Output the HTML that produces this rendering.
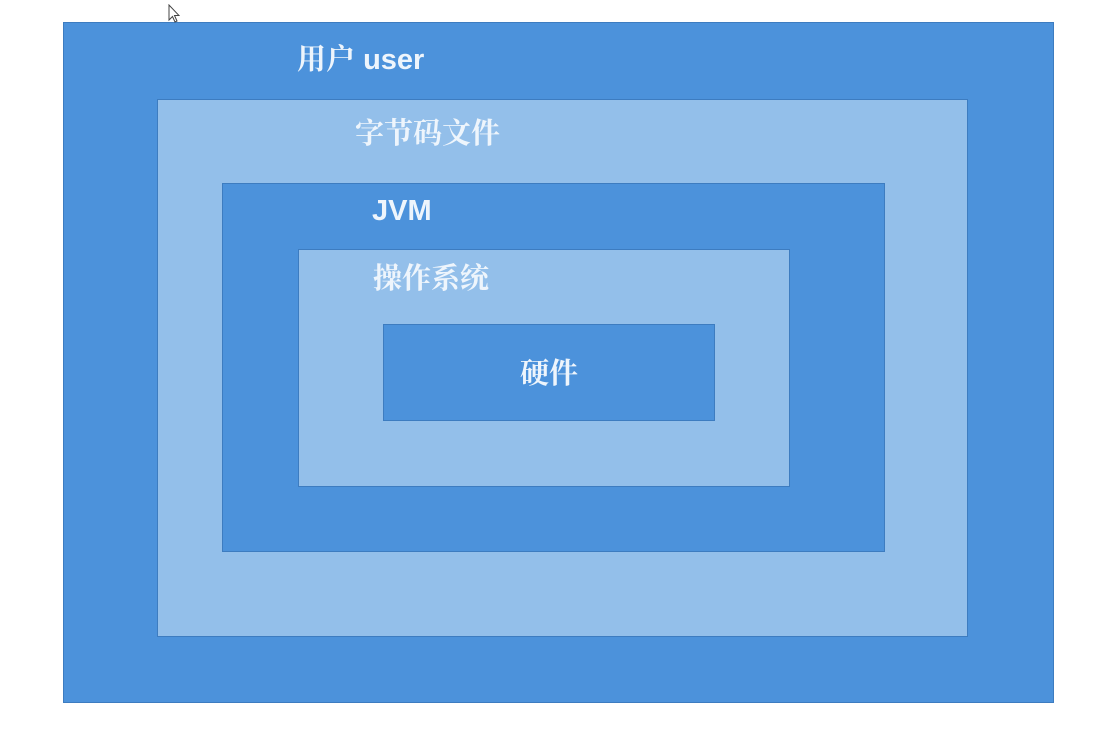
<!DOCTYPE html>
<html><head><meta charset="utf-8"><style>
body{margin:0;width:1104px;height:734px;background:#fff;position:relative;overflow:hidden;font-family:"Liberation Sans","Noto Sans CJK SC",sans-serif;}
.b{position:absolute;box-sizing:border-box;border:1.5px solid #3d7cc0;}
.d{background:#4c92db;}
.l{background:#93bfea;}
.t{position:absolute;color:#eef5fc;font-weight:bold;font-size:29px;white-space:nowrap;}
.s{font-family:"Noto Serif CJK SC","Noto Sans CJK SC",serif;font-weight:bold;}
</style></head><body>
<div class="b d" style="left:63px;top:22px;width:991px;height:681px"></div>
<div class="b l" style="left:157px;top:99px;width:811px;height:538px"></div>
<div class="b d" style="left:222px;top:183px;width:663px;height:369px"></div>
<div class="b l" style="left:298px;top:249px;width:492px;height:238px"></div>
<div class="b d" style="left:383px;top:324px;width:332px;height:97px"></div>
<div class="t" style="left:297px;top:37px"><span class="s">用户</span> user</div>
<div class="t s" style="left:355px;top:111px">字节码文件</div>
<div class="t" style="left:372px;top:195px">JVM</div>
<div class="t s" style="left:373px;top:256px">操作系统</div>
<div class="t s" style="left:520px;top:351px">硬件</div>
<svg style="position:absolute;left:168px;top:4px" width="12" height="19" viewBox="0 0 12 19"><path d="M1 1 L1 16 L4.5 12.5 L7 18 L9 17 L6.5 11.5 L11 11.5 Z" fill="#fff" stroke="#444" stroke-width="1"/></svg>
</body></html>
